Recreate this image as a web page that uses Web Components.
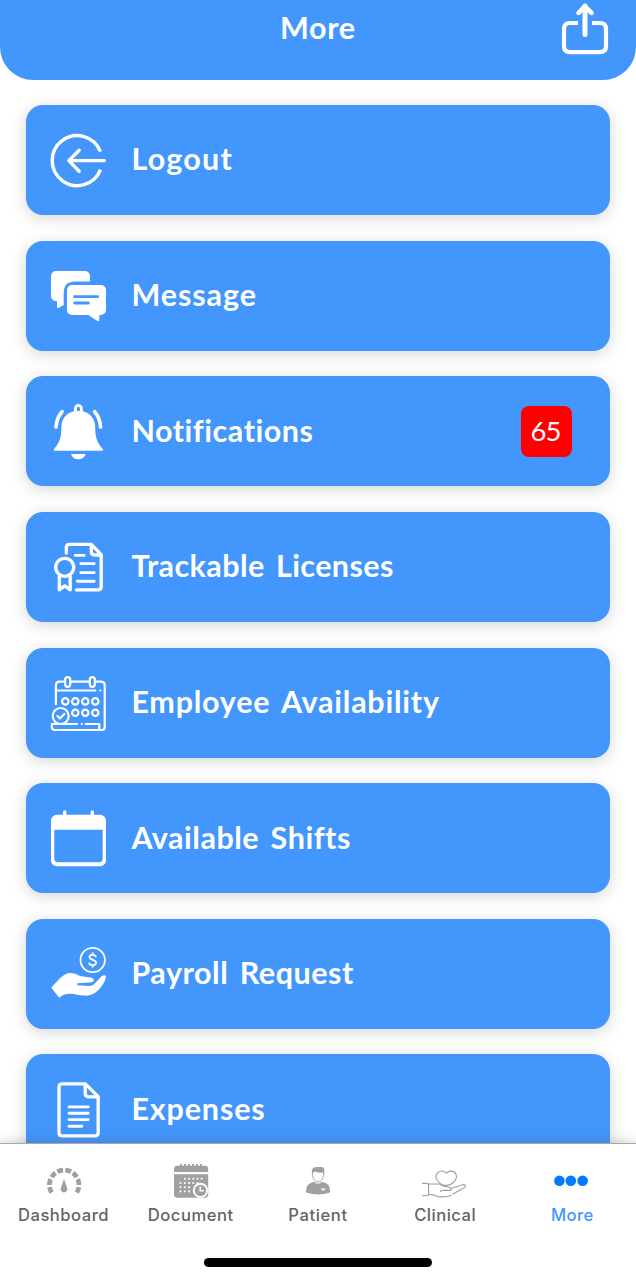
<!DOCTYPE html>
<html lang="en">
<head>
<meta charset="utf-8">
<title>More</title>
<style>
html,body{margin:0;height:100%;overflow:hidden;background:#fff}
</style>
</head>
<body>
<more-screen></more-screen>
<script>
const menuIcons = {
  logout: `<g fill="none" stroke="#fff" stroke-width="3.4" stroke-linecap="round" stroke-linejoin="round"><path d="M50.5 20.6A25 25 0 1 0 50.5 38.6" stroke-linecap="butt"/><path d="M19 29.6H54.3M29.2 19.2L18.8 29.6L29.2 40.2"/></g>`,
  message: `<path fill="#fff" d="M6 4H35a5 5 0 0 1 5 5V14.6H25.5Q13.7 14.6 13.7 26V38L8.5 41Q7 41.4 7 39.8V34.3H6a5 5 0 0 1-5-5V9a5 5 0 0 1 5-5Z"/><path fill="#fff" d="M22 18H51a5 5 0 0 1 5 5V43a5 5 0 0 1-5 5H49.3V53Q49 54.5 47.5 54L38.3 48H22a5 5 0 0 1-5-5V23a5 5 0 0 1 5-5Z"/><path d="M24.6 29.6H47.8M24.6 36H38.4" stroke="#4296fc" stroke-width="2.8" stroke-linecap="round"/>`,
  bell: `<g fill="none" stroke="#fff" stroke-width="3.3"><rect x="25.4" y="3.5" width="5.9" height="8" rx="2.9" stroke-width="2.9"/><path stroke-width="3.6" stroke-linecap="round" d="M12 9.7Q6.8 15.5 6 25M44.6 9.7Q49.8 15.5 50.6 25"/></g><path fill="#fff" d="M28.3 8.7C38.5 9 44.5 15 45.2 24C45.2 35 46.5 40 52.8 47V48.7H4V47C10.2 40 11.4 35 11.4 24C12 15 18.2 9 28.3 8.7ZM21 52H35.7Q33.8 57.3 28.3 57.3T21 52Z"/><rect x="27" y="5.5" width="2.6" height="3.2" fill="#4296fc"/>`,
  license: `<g fill="none" stroke="#fff" stroke-width="3.3" stroke-linejoin="round"><path d="M16.3 15V9.3Q16.5 6.4 19.5 6.4H41.3L51.2 16.7V48.5Q51.2 51.9 47.8 51.9H26.5" stroke-linecap="round"/><path d="M41.3 6.4V13.6Q41.3 17 44.7 17H51.2"/><circle cx="14.7" cy="29.3" r="9"/><path d="M9.3 37.5V51.8L14.7 47.9L20.2 51.8V37.5"/><path stroke-width="2.9" stroke-linecap="round" d="M25.2 17.4H34.2M30.8 25.6H44.2M30.8 34.6H44.2M27.4 43.3H44.2"/></g>`,
  calendar: `<g fill="none" stroke="#fff" stroke-width="2.2" stroke-linecap="round" stroke-linejoin="round"><path d="M5.9 30.2V11.2Q6 7.6 9.6 7.6H14.8M20.5 7.6H39.5M45.2 7.6H51Q54.7 7.8 54.7 11.4V53.2Q54.6 56 52 56H5Q1.8 56 1.8 53V50H27M35.7 50H49.3V56M5.9 16.5H45.3M50.2 16.5h.1M31.8 50h.1"/><rect x="15.2" y="3.2" width="5" height="9.6" rx="2.5"/><rect x="39.8" y="3.2" width="5" height="9.6" rx="2.5"/><circle cx="10.7" cy="42" r="8"/><path d="M7.5 42L10 44.4L14.3 39.9"/>${[[15.3,27.4],[25.3,27.4],[35.3,27.4],[45.3,27.4],[25.3,38.8],[35.3,38.8],[45.3,38.8]].map(c=>`<circle cx="${c[0]}" cy="${c[1]}" r="3.2"/>`).join('')}</g>`,
  shifts: `<path fill="#fff" fill-rule="evenodd" d="M7 5.7H13V3a1.7 1.7 0 0 1 3.4 0V5.7H40.6V3A1.7 1.7 0 0 1 44 3V5.7H50a6 6 0 0 1 6 6V51.3a6 6 0 0 1-6 6H7a6 6 0 0 1-6-6V11.7a6 6 0 0 1 6-6ZM4.3 20.7V49.5a3.8 3.8 0 0 0 3.8 3.8H48.9a3.8 3.8 0 0 0 3.8-3.8V20.7Z"/>`,
  payroll: `<circle cx="42.7" cy="15" r="12.2" fill="none" stroke="#fff" stroke-width="1.8"/><path d="M46 12.2C45.8 9.2 39.5 8.8 39.5 12C39.5 15.5 46.1 14.2 46.1 17.8C46.1 21.2 39.3 20.8 39.1 17.6M42.7 7.6V10M42.7 20V22.4" fill="none" stroke="#fff" stroke-width="1.8"/><path fill="#fff" d="M1.2 42.5L10 33.2Q15.5 28 20.5 28Q25 28.2 30 31L40.5 32.5Q44 33.5 43.8 35.2Q43.4 37.2 39.8 37.5L27.3 38.2V40.3L39.5 41Q43 40.7 45 38.2L51.5 31.3Q54.3 29.5 56 31Q55.8 36 51 42Q45.5 49.8 37 50.8Q29 50.5 23.8 49Q13.8 48 9.2 52.8Z"/>`,
  expenses: `<g fill="none" stroke="#fff" stroke-width="3.3" stroke-linejoin="round"><path d="M12 3.8H35.4L48.2 16.7V52.6Q48.2 55.9 45 55.9H12.2Q9 55.9 9 52.7V6.9Q9 3.8 12 3.8Z"/><path d="M35.2 4V13.3Q35.2 16.8 38.7 16.8H48"/><path stroke-width="2.9" stroke-linecap="round" d="M19 26.9H38.2M19 33.2H38.2M19 39.6H38.2M19 46.2H31.8"/></g>`
};

const dot = (x, y) => `<rect x="${x - .9}" y="${y - .9}" width="1.8" height="1.8"/>`;
const cols = [13.5, 17.8, 22.1, 26.3, 30.5, 34.7];
const tabIcons = {
  dashboard: `<path d="M11.6 32.6A14.8 14.8 0 1 1 36.8 32.6" pathLength="80" stroke-dasharray="7.6 2.743" fill="none" stroke="#a0a0a0" stroke-width="4.7"/><path fill="#a0a0a0" d="M24 19L27 27.4A3.4 3.4 0 1 1 21 27.4Z"/>`,
  document: `<path fill="#a0a0a0" d="M10 5.7H38Q41.2 5.8 41.2 9V12H7V9Q7 5.8 10 5.7ZM7 14.3H41.2V34.6Q41.2 37.7 38 37.7H10Q7 37.7 7 34.6Z"/><path d="M14 4V7M18 4V7M22 4V7M26 4V7M30 4V7M34 4V7" stroke="#a0a0a0" stroke-width="1.9"/><g fill="#fff">${cols.slice(1).map(x=>dot(x,18.7)).join('')}${cols.slice(0,5).map(x=>dot(x,23)).join('')}${cols.slice(0,3).map(x=>dot(x,27.2)+dot(x,31.4)).join('')}<circle cx="33.5" cy="30.4" r="7.7"/></g><circle cx="33.5" cy="30.4" r="5.7" fill="#a0a0a0"/><path d="M33.2 26.6V30.8H37" fill="none" stroke="#fff" stroke-width="1.5"/>`,
  patient: `<path d="M18.6 12V15.5Q19.5 21.8 24 22Q28.6 21.8 29.5 15.5V12" fill="#fff" stroke="#a0a0a0" stroke-width=".9"/><path fill="#a0a0a0" d="M17.9 14.5V10.5Q18.3 7 22.5 7H27.5Q30.3 7.3 30.3 10V14.5L28.8 12.6Q24 13.2 21.2 11.4L19 12.5ZM20 21.8Q24 25.8 28 21.8Q36.2 23.5 36 30.5V32.5Q30 34.4 24 34.4T12 32.5V30.5Q12 23.5 20 21.8Z"/><path d="M26.7 28.5L31.2 28.5L30.3 30.4H28.5Z" fill="#fff"/>`,
  clinical: `<g fill="none" stroke="#a0a0a0" stroke-width="1.15" stroke-linecap="round" stroke-linejoin="round"><path d="M25.2 13.1Q22.8 10.4 19.5 11.2Q14.8 12.8 15 17Q15.5 20.2 19.7 23.9Q22.5 25.6 25.5 25.3Q29.5 25.5 32.3 22.5Q35.7 18.8 35.5 16.5Q35 11.7 30.7 11.1Q27.4 10.8 25.2 13.1Z"/><path d="M1.4 23.3H6Q7.6 23.3 7.6 25V33Q7.5 35.6 5.5 35.7H1.4M7.6 24H18.2Q22.4 26.7 26.5 26.7Q31 27.6 29.8 30.3H22.8Q21.3 30.2 19.6 31.5M30 28.5L41.5 24.7Q44.4 24.1 44.3 26.2Q44.2 27.2 43.2 27.7L32 34M30 35.3Q26 37.4 17 36.7Q12 34.2 8.2 34.7"/></g>`,
  more: `<g fill="#007aff"><circle cx="11.4" cy="20.8" r="5.3"/><circle cx="22.8" cy="20.8" r="5.3"/><circle cx="34.6" cy="20.8" r="5.3"/></g>`
};

/* Text whose tracking is adjusted so that it fills the width given in "fit". */
class FitText extends HTMLElement {
  constructor() {
    super();
    this.attachShadow({mode: 'open'}).innerHTML = `<style>:host{display:block;white-space:nowrap;line-height:1}span{display:inline-block;font-kerning:normal;font-variant-ligatures:none}</style><span><slot></slot></span>`;
  }
  connectedCallback() {
    const span = this.shadowRoot.querySelector('span');
    const n = this.textContent.length;
    const gap = (+this.getAttribute('fit') - span.getBoundingClientRect().width) / (n - 1);
    span.style.letterSpacing = gap.toFixed(3) + 'px';
    span.style.marginRight = (-gap).toFixed(3) + 'px';
  }
}

function fitText(text, fit) {
  const el = document.createElement('fit-text');
  el.setAttribute('fit', fit);
  el.textContent = text;
  return el;
}

class AppHeader extends HTMLElement {
  constructor() {
    super();
    this.attachShadow({mode: 'open'});
  }
  connectedCallback() {
    this.shadowRoot.innerHTML = `<style>
      :host{display:grid;grid-template-columns:1fr auto 1fr;box-sizing:border-box;height:79.7px;flex:none;background:#4296fc;border-radius:0 0 33px 33px;color:#fff;font:700 30.5px Lato,sans-serif}
      .title{grid-column:2;padding:12px 1px 0 0}
      svg{justify-self:end;margin-right:26px}
    </style><div class="title"></div>
    <svg width="50" height="58" viewBox="0 0 50 58" fill="none" stroke="#fff" stroke-width="4.2" stroke-linejoin="round"><path d="M18 23H10Q4 23 4 29V46Q4 52.2 10 52.2H40Q46 52.2 46 46V29Q46 23 40 23H32"/><path d="M25 6V34.5" stroke-width="5" stroke-linecap="round"/><path d="M18.5 12.8L25 6.3L31.5 12.8" stroke-width="4.6" stroke-linecap="round"/></svg>`;
    this.shadowRoot.querySelector('.title').append(fitText(this.getAttribute('label'), 75));
  }
}

class MenuCard extends HTMLElement {
  constructor() {
    super();
    this.attachShadow({mode: 'open'});
  }
  connectedCallback() {
    const badge = this.getAttribute('badge');
    this.shadowRoot.innerHTML = `<style>
      :host{display:flex;align-items:center;box-sizing:border-box;height:110px;flex:none;padding:0 38.5px 0 24px;border-radius:17px;background:#4296fc;box-shadow:0 3px 16px rgba(0,0,0,.17);color:#fff;font:700 30.5px Lato,sans-serif}
      svg{flex:none;margin-right:23.4px}
      .label{flex:1;padding-bottom:2.6px;word-spacing:3.5px}
      .badge{display:flex;align-items:center;justify-content:center;box-sizing:border-box;width:51px;height:51px;padding-bottom:2px;border-radius:8px;background:#f00;font-weight:400;font-size:27.5px}
    </style><svg width="58" height="58" viewBox="0 0 58 58">${menuIcons[this.getAttribute('icon')]}</svg>
    <div class="label"></div>${badge ? `<div class="badge"></div>` : ''}`;
    this.shadowRoot.querySelector('.label').append(fitText(this.getAttribute('label'), this.getAttribute('fit')));
    if (badge) this.shadowRoot.querySelector('.badge').append(fitText(badge, 31));
  }
}

class TabItem extends HTMLElement {
  constructor() {
    super();
    this.attachShadow({mode: 'open'});
  }
  connectedCallback() {
    this.shadowRoot.innerHTML = `<style>
      :host{display:flex;flex:1;flex-direction:column;align-items:center;padding-top:16px;color:#646464;font:450 16.6px Inter,sans-serif}
      :host([active]){color:#4296fc}
      svg{display:block}
      .label{padding:7px .6px 0 0}
    </style><svg width="48" height="40" viewBox="0 0 48 40">${tabIcons[this.getAttribute('icon')]}</svg><div class="label"></div>`;
    this.shadowRoot.querySelector('.label').append(fitText(this.getAttribute('label'), this.getAttribute('fit')));
  }
}

class TabBar extends HTMLElement {
  constructor() {
    super();
    this.attachShadow({mode: 'open'}).innerHTML = `<style>
      :host{display:flex;flex-direction:column;flex:none;height:137px;box-sizing:border-box;border-top:1px solid #a9a9ab;background:#fff;position:relative;box-shadow:0 0 12px rgba(90,90,90,.35)}
      .tabs{display:flex;height:114px}
      .home{width:228px;height:8.5px;border-radius:5px;background:#000;align-self:center}
    </style><div class="tabs"><slot></slot></div><div class="home"></div>`;
  }
}

class MoreScreen extends HTMLElement {
  constructor() {
    super();
    this.attachShadow({mode: 'open'}).innerHTML = `<style>
      :host{display:flex;flex-direction:column;width:636px;height:1280px;overflow:hidden;background:#fff}
      main{display:flex;flex:1;min-height:0;flex-direction:column;gap:25.65px;padding:25.3px 26px 0;overflow:hidden}
    </style>
    <app-header label="More"></app-header>
    <main>
      <menu-card icon="logout" label="Logout" fit="100.5"></menu-card>
      <menu-card icon="message" label="Message" fit="124.7"></menu-card>
      <menu-card icon="bell" label="Notifications" fit="181.6" badge="65"></menu-card>
      <menu-card icon="license" label="Trackable Licenses" fit="262"></menu-card>
      <menu-card icon="calendar" label="Employee Availability" fit="307.6"></menu-card>
      <menu-card icon="shifts" label="Available Shifts" fit="219"></menu-card>
      <menu-card icon="payroll" label="Payroll Request" fit="222"></menu-card>
      <menu-card icon="expenses" label="Expenses" fit="133.3"></menu-card>
    </main>
    <tab-bar>
      <tab-item icon="dashboard" label="Dashboard" fit="90.5"></tab-item>
      <tab-item icon="document" label="Document" fit="85.5"></tab-item>
      <tab-item icon="patient" label="Patient" fit="58.7"></tab-item>
      <tab-item icon="clinical" label="Clinical" fit="61.5"></tab-item>
      <tab-item icon="more" label="More" fit="42.4" active></tab-item>
    </tab-bar>`;
  }
}

customElements.define('fit-text', FitText);
customElements.define('app-header', AppHeader);
customElements.define('menu-card', MenuCard);
customElements.define('tab-item', TabItem);
customElements.define('tab-bar', TabBar);
customElements.define('more-screen', MoreScreen);
</script>
</body>
</html>
